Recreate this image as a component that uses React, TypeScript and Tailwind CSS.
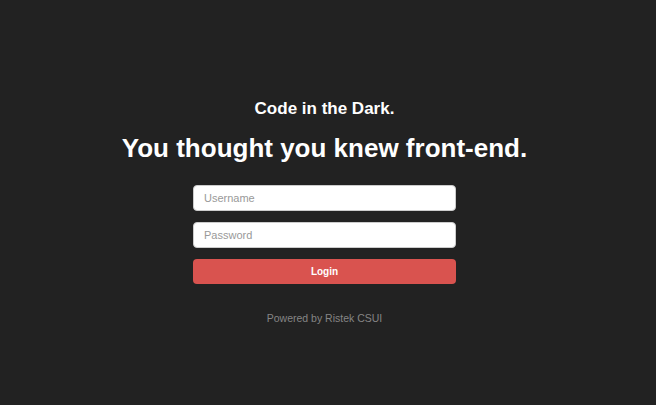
export default function App() {
  return (
    <div className="min-h-[405px] bg-[#222222] pr-[7px] font-['Liberation_Sans',Arial,sans-serif] text-white">
      <div className="flex flex-col items-center pt-[98px]">
        <h2 className="text-[17px] font-bold leading-[22px]">Code in the Dark.</h2>
        <h1 className="mt-[12px] text-[26px] font-bold leading-[32px]">You thought you knew front-end.</h1>

        <form className="mt-[21px] flex w-[263px] flex-col">
          <input
            className="h-[26px] rounded-[4px] border border-[#cccccc] bg-white px-[10px] text-[11px] text-[#555555] outline-none placeholder:text-[#999999]"
            placeholder="Username"
            type="text"
          />
          <input
            className="mt-[11px] h-[26px] rounded-[4px] border border-[#cccccc] bg-white px-[10px] text-[11px] text-[#555555] outline-none placeholder:text-[#999999]"
            placeholder="Password"
            type="password"
          />
          <button
            className="mt-[11px] h-[25px] rounded-[4px] bg-[#d9534f] text-[10px] font-bold text-white"
            type="button"
          >
            Login
          </button>
        </form>

        <p className="mt-[26px] text-[10.5px] leading-[16px] text-[#858585]">Powered by Ristek CSUI</p>
      </div>
    </div>
  );
}
